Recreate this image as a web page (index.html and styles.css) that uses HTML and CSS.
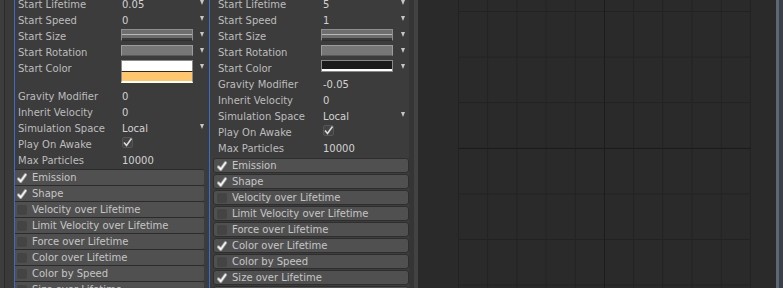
FILE: index.html
```html
<!doctype html>
<html lang="en">
<head>
	<meta charset="UTF-8">
	<title>Particle System</title>
	<link rel="stylesheet" href="styles.css">
</head>
<body>
	<div class="edge"></div>

	<div class="inspector first">
		<div class="props">
			<div class="prop"><span>Start Lifetime</span><span>0.05</span><i class="arr"></i></div>
			<div class="prop"><span>Start Speed</span><span>0</span><i class="arr"></i></div>
			<div class="prop"><span>Start Size</span><span class="curve"></span><i class="arr"></i></div>
			<div class="prop"><span>Start Rotation</span><span class="flat"></span><i class="arr"></i></div>
			<div class="prop tall"><span>Start Color</span>
				<span class="colors"><b class="sw white"></b><b class="sw orange"></b></span><i class="arr"></i></div>
			<div class="prop"><span>Gravity Modifier</span><span>0</span></div>
			<div class="prop"><span>Inherit Velocity</span><span>0</span></div>
			<div class="prop"><span>Simulation Space</span><span>Local</span><i class="arr"></i></div>
			<div class="prop"><span>Play On Awake</span><span class="check"><svg class="tick" viewBox="0 0 11 11"><rect x="0.5" y="0.5" width="10" height="10" rx="1.5"/><path d="M2 5.5 L4.5 8.5 L9.5 1.5"/></svg></span></div>
			<div class="prop"><span>Max Particles</span><span>10000</span></div>
		</div>
		<div class="modules">
			<div class="mod on"><i class="box"></i>Emission</div>
			<div class="mod on"><i class="box"></i>Shape</div>
			<div class="mod"><i class="box"></i>Velocity over Lifetime</div>
			<div class="mod"><i class="box"></i>Limit Velocity over Lifetime</div>
			<div class="mod"><i class="box"></i>Force over Lifetime</div>
			<div class="mod"><i class="box"></i>Color over Lifetime</div>
			<div class="mod"><i class="box"></i>Color by Speed</div>
			<div class="mod"><i class="box"></i>Size over Lifetime</div>
			<div class="mod"><i class="box"></i>Size by Speed</div>
		</div>
	</div>

	<div class="inspector second">
		<div class="props">
			<div class="prop"><span>Start Lifetime</span><span>5</span><i class="arr"></i></div>
			<div class="prop"><span>Start Speed</span><span>1</span><i class="arr"></i></div>
			<div class="prop"><span>Start Size</span><span class="curve"></span><i class="arr"></i></div>
			<div class="prop"><span>Start Rotation</span><span class="flat"></span><i class="arr"></i></div>
			<div class="prop"><span>Start Color</span><span class="colors"><b class="sw black"></b></span><i class="arr"></i></div>
			<div class="prop"><span>Gravity Modifier</span><span>-0.05</span></div>
			<div class="prop"><span>Inherit Velocity</span><span>0</span></div>
			<div class="prop"><span>Simulation Space</span><span>Local</span><i class="arr"></i></div>
			<div class="prop"><span>Play On Awake</span><span class="check"><svg class="tick" viewBox="0 0 11 11"><rect x="0.5" y="0.5" width="10" height="10" rx="1.5"/><path d="M2 5.5 L4.5 8.5 L9.5 1.5"/></svg></span></div>
			<div class="prop"><span>Max Particles</span><span>10000</span></div>
		</div>
		<div class="modules">
			<div class="mod on"><i class="box"></i>Emission</div>
			<div class="mod on"><i class="box"></i>Shape</div>
			<div class="mod"><i class="box"></i>Velocity over Lifetime</div>
			<div class="mod"><i class="box"></i>Limit Velocity over Lifetime</div>
			<div class="mod"><i class="box"></i>Force over Lifetime</div>
			<div class="mod on"><i class="box"></i>Color over Lifetime</div>
			<div class="mod"><i class="box"></i>Color by Speed</div>
			<div class="mod on"><i class="box"></i>Size over Lifetime</div>
			<div class="mod"><i class="box"></i>Size by Speed</div>
		</div>
	</div>

	<div class="split"></div>

	<div class="curves">
		<div class="grid"></div>
	</div>
	<div class="rim"></div>
</body>
</html>
```

FILE: styles.css
```css
* {
	margin: 0;
	padding: 0;
	box-sizing: border-box;
}

body {
	display: flex;
	height: 288px;
	overflow: hidden;
	background: #383838;
	font-family: "DejaVu Sans", Verdana, sans-serif;
	font-size: 10px;
	color: #bdbdbd;
}

.edge {
	width: 14px;
	flex: none;
	background: #3a3a3a;
	border-left: 4px solid #3d3d3d;
	box-shadow: inset 1px 0 0 #2b2b2b;
}

.inspector {
	flex: none;
	background: #3c3c3c;
	overflow: hidden;
}

.inspector.first {
	width: 196px;
	border-left: 1px solid #3d6cc4;
	border-right: 1px solid #3d6cc4;
}

.inspector.second {
	width: 204px;
	border-right: 5px solid #353535;
}

.props {
	margin-top: -5px;
}

.first .props {
	padding: 0 2px 0 3px;
}

.second .props {
	padding: 0 0 0 8px;
}

.prop {
	display: grid;
	height: 16px;
	line-height: 16px;
	align-items: start;
	white-space: nowrap;
}

.first .prop {
	grid-template-columns: 104px 74px 1fr;
}

.second .prop {
	grid-template-columns: 105px 74px 1fr;
}

.prop.tall {
	height: 28px;
}

.prop span {
	padding-top: 2px;
}

.prop span:nth-child(2) {
	color: #d2d2d2;
}

.arr {
	justify-self: center;
	margin-top: 5px;
	width: 0;
	height: 0;
	border-left: 2.5px solid transparent;
	border-right: 2.5px solid transparent;
	border-top: 5px solid #c6c6c6;
}

.prop .curve, .prop .flat, .prop .colors {
	display: block;
	width: 72px;
	margin-left: -1px;
	padding: 0;
}

.second .prop .curve, .second .prop .flat, .second .prop .colors {
	margin-left: -2px;
}

.curve {
	height: 12px;
	margin-top: 2px;
	background: linear-gradient(#6e6e6e 4px, #b8b8b8 4px, #b8b8b8 5px, #6e6e6e 5px, #6e6e6e 8px, #3a3a3a 8px);
	border: 1px solid #8e8e8e;
	border-bottom-color: #2e2e2e;
}

.flat {
	height: 11px;
	margin-top: 2px;
	background: #777;
	border: 1px solid #9c9c9c;
	border-bottom-color: #5a5a5a;
}

.colors {
	margin-top: 1px;
}

.sw {
	display: block;
	border: 1px solid #8a8a8a;
}

.sw.white {
	height: 12px;
	background: #fff;
	border-bottom-color: #2a2a2a;
}

.sw.orange {
	height: 11px;
	background: #ffc66b;
	border-top: none;
	border-bottom: 2px solid #fff;
}

.sw.black {
	height: 12px;
	background: linear-gradient(#1c1c1c 8px, #fff 8px);
}

.prop .check {
	padding-top: 2px;
}

.tick {
	display: block;
	width: 11px;
	height: 11px;
}

.tick rect {
	fill: #434343;
	stroke: #555;
}

.tick path {
	fill: none;
	stroke: #dadada;
	stroke-width: 1.6;
}

.modules {
	white-space: nowrap;
	color: #c6c6c6;
}

.first .modules {
	margin: 2px 5px 0 0;
}

.second .modules {
	margin: 3px 0 0 3px;
}

.mod {
	display: flex;
	align-items: center;
	background: #505050;
}

.first .mod {
	height: 16px;
	padding-left: 2px;
	border-top: 1px solid #2b2b2b;
	border-radius: 0 2px 2px 0;
}

.second .mod {
	height: 15px;
	margin-bottom: 1px;
	padding-left: 3px;
	border: 1px solid #2e2e2e;
	border-radius: 3px;
}

.box {
	width: 10px;
	height: 10px;
	margin-right: 5px;
	border-radius: 2px;
	background: #444;
}

.mod.on .box {
	background: no-repeat center / 11px 11px url("data:image/svg+xml,%3Csvg xmlns='http://www.w3.org/2000/svg' viewBox='0 0 11 11'%3E%3Cpath d='M1.3 5.6 L4.2 9 L9.8 1.2' fill='none' stroke='%23fff' stroke-width='2.2'/%3E%3C/svg%3E");
}

.split {
	width: 4px;
	flex: none;
	background: #424242;
}

.curves {
	flex: 1;
	background: #2a2a2a;
	padding-left: 40px;
}

.grid {
	width: 293px;
	height: 100%;
	background-color: #2a2a2a;
	background-image:
		linear-gradient(to right, #1c1c1c 1px, transparent 1px),
		linear-gradient(to bottom, #1c1c1c 1px, transparent 1px),
		linear-gradient(to right, #222 1px, transparent 1px),
		linear-gradient(to bottom, #222 1px, transparent 1px);
	background-size: 1px 100%, 100% 1px, 29.2px 100%, 100% 45.6px;
	background-position: 146px 0, 0 148px, 0 0, 0 11px;
	background-repeat: no-repeat, no-repeat, repeat, repeat;
}

.rim {
	width: 7px;
	flex: none;
	background: #3b4048;
	border-left: 3px solid #5d6673;
}
```
